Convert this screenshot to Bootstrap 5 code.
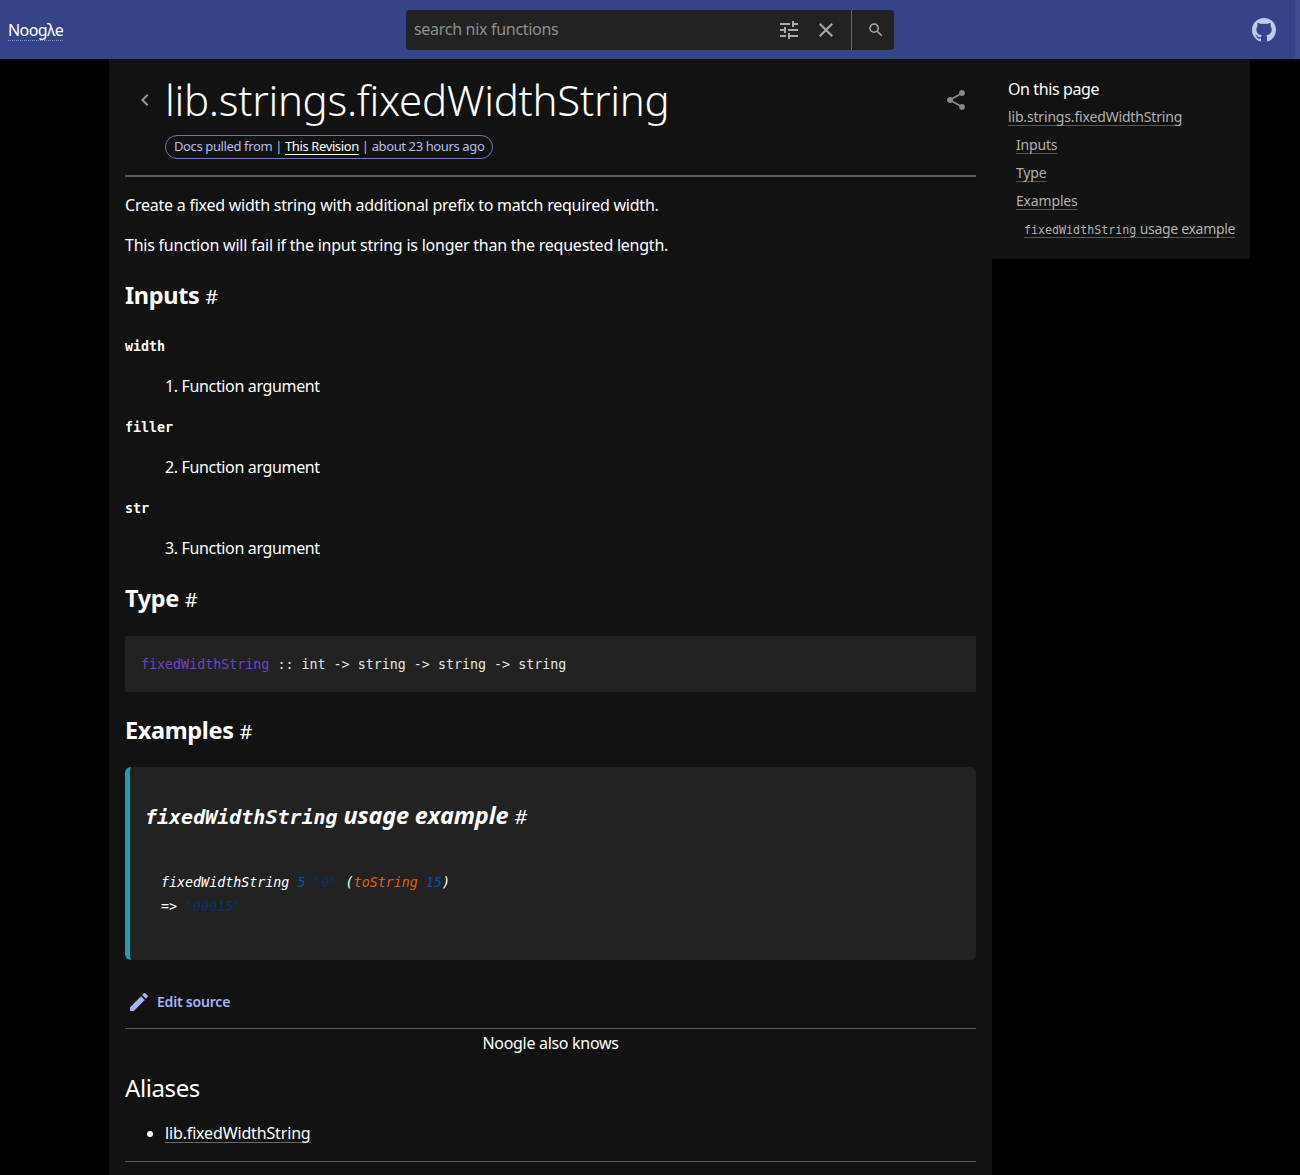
<!DOCTYPE html>
<html lang="en">
<head>
<meta charset="utf-8">
<title>lib.strings.fixedWidthString</title>
<link href="https://cdn.jsdelivr.net/npm/bootstrap@5.3.0/dist/css/bootstrap.min.css" rel="stylesheet">
<style>
html,body{height:1175px;overflow:hidden}
body{background:#000;color:#fff;font-family:"Noto Sans","Open Sans",sans-serif;font-size:16px;line-height:24px;letter-spacing:-.235px}
.mono{font-family:"DejaVu Sans Mono","Liberation Mono",monospace}
.topbar{height:59px;background:#354389;padding:0 8px}
.scrolltrack{width:5px;top:0;right:0;height:59px;background:rgba(255,255,255,.05)}
.brand{color:#fff;font-size:16px;letter-spacing:-.6px;text-decoration:underline dotted 1px;text-underline-offset:4px;text-decoration-color:#8a94c4}
.searchbox{width:488px;height:40px;background:#222;border-radius:4px;color:#8e8e8e}
.searchbox .ph{font-size:16px;line-height:38px;height:40px;padding-left:8px;letter-spacing:-.3px}
.searchsep{width:1px;height:40px;background:#666;margin-left:4px}
.icotune{margin-right:13px}
.icoclose{margin-right:9px}
.searchgo{width:42px;padding-left:6px}
.ghicon{margin-right:16px}
.shell{display:grid;grid-template-columns:883px 258px;margin-left:109px;align-items:start}
.mainpane{background:#121212;height:1116px;padding:0 16px}
.tocpane{background:#121212;height:200px;padding:18px 0 0 16px;font-size:14px;white-space:nowrap}
.tochead{font-size:16px;line-height:24px;height:28px;letter-spacing:-.4px}
.tocrow{height:28px;line-height:24px;color:#b0b0b0;letter-spacing:-.17px}
.tocrow a{color:#b0b0b0;text-decoration:underline 1px;text-decoration-color:#555;text-underline-offset:3px}
.tocrow.tl2{letter-spacing:-.3px}
.tocrow .mono{font-size:11.67px}
.tl1{padding-left:8px}.tl2{padding-left:16px}
.titlerow{height:118px;border-bottom:2px solid #5c5c5c}
.backicon{width:40px;padding-left:8px}
.topicon{margin-top:29px}
.shareicon{margin-right:8px}
.pagetitle{font-size:42px;line-height:50px;font-weight:300;margin:16px 0 0;letter-spacing:-.3px}
.pillbox{display:inline-block;height:24px;line-height:21px;border:1px solid #6a78c0;border-radius:12px;padding:0 8px;font-size:13px;color:#b4bcec;margin-top:10px;letter-spacing:-.38px;vertical-align:top}
.pillbox a{color:#fff;text-underline-offset:3px}
.para{margin:0;line-height:24px;height:40px}
.sect{font-size:23.5px;font-weight:700;line-height:32px;margin:0;letter-spacing:-.35px}
.hash{font-size:20px;font-weight:400;letter-spacing:0}
.argname{font-size:13.33px;font-weight:700;line-height:20px;height:21px}
.argdesc{padding-left:40px;height:60px;padding-top:16px;letter-spacing:-.35px}
.codebox{background:#222;height:56px;padding:17px 16px 15px;font-size:13.33px;line-height:24px;border-radius:2px;color:#e6e6e6}
.fnc{color:#6f42c1}
.notebox{background:#222;border-left:5px solid #17a2b8;border-radius:6px;height:193px;padding:32px 15px 0;font-style:italic}
.ntitle{font-size:23.5px;font-weight:700;line-height:32px;margin:0;letter-spacing:-.2px}
.ntitle .mono{font-size:20px}
.egcode{font-size:13.33px;line-height:24px;padding:38px 16px 0}
.nb{color:#0550ae}.ns{color:#0a3069}.no{color:#d9650f}
.editlink{color:#a5b4f5;font-size:14px;font-weight:600;text-decoration:none;letter-spacing:-.2px;height:24px;margin-top:30px}
.editicon{margin-left:2px;margin-right:6px}
.hrline{height:1px;background:#5c5c5c}
.knows{margin-top:2px;letter-spacing:-.3px}
.aliastitle{font-size:24px;line-height:32px;font-weight:400;margin:17px 0 0;letter-spacing:-.4px}
.aliaslist{margin:17px 0 0;padding-left:40px;letter-spacing:-.15px}
.aliaslist a{color:#fff;text-decoration:underline 1px;text-decoration-color:#667;text-underline-offset:3px}
.mono{letter-spacing:0}
</style>
</head>
<body>
<header class="topbar d-flex align-items-center justify-content-between position-relative">
  <a class="brand" href="#">Noogλe</a>
  <div class="searchbox d-flex align-items-center position-absolute top-50 start-50 translate-middle">
    <span class="ph flex-grow-1">search nix functions</span>
    <svg class="icotune" width="24" height="24" viewBox="0 0 24 24" fill="#aaa"><path d="M3 17v2h6v-2H3zM3 5v2h10V5H3zm10 16v-2h8v-2h-8v-2h-2v6h2zM7 9v2H3v2h4v2h2V9H7zm14 4v-2H11v2h10zm-6-4h2V7h4V5h-4V3h-2v6z"/></svg>
    <svg class="icoclose" width="24" height="24" viewBox="0 0 24 24" fill="#aaa"><path d="M19 6.41 17.59 5 12 10.59 6.41 5 5 6.41 10.59 12 5 17.59 6.41 19 12 13.41 17.59 19 19 17.59 13.41 12z"/></svg>
    <span class="searchsep"></span>
    <span class="searchgo d-flex justify-content-center"><svg width="18" height="18" viewBox="0 0 24 24" fill="#aaa"><path d="M15.5 14h-.79l-.28-.27A6.47 6.47 0 0 0 16 9.5 6.5 6.5 0 1 0 9.5 16c1.61 0 3.09-.59 4.23-1.57l.27.28v.79l5 4.99L20.49 19l-4.99-5zm-6 0C7.01 14 5 11.99 5 9.5S7.01 5 9.5 5 14 7.01 14 9.5 11.99 14 9.5 14z"/></svg></span>
  </div>
  <svg class="ghicon" width="24" height="24" viewBox="0 0 16 16" fill="#c3cae8"><path d="M8 0C3.58 0 0 3.58 0 8c0 3.54 2.29 6.53 5.47 7.59.4.07.55-.17.55-.38 0-.19-.01-.82-.01-1.49-2.01.37-2.53-.49-2.69-.94-.09-.23-.48-.94-.82-1.13-.28-.15-.68-.52-.01-.53.63-.01 1.08.58 1.23.82.72 1.21 1.87.87 2.33.66.07-.52.28-.87.51-1.07-1.78-.2-3.64-.89-3.64-3.95 0-.87.31-1.59.82-2.15-.08-.2-.36-1.02.08-2.12 0 0 .67-.21 2.2.82.64-.18 1.32-.27 2-.27s1.36.09 2 .27c1.53-1.04 2.2-.82 2.2-.82.44 1.1.16 1.92.08 2.12.51.56.82 1.27.82 2.15 0 3.07-1.87 3.75-3.65 3.95.29.25.54.73.54 1.48 0 1.07-.01 1.93-.01 2.2 0 .21.15.46.55.38A8.01 8.01 0 0 0 16 8c0-4.42-3.58-8-8-8z"/></svg>
  <span class="scrolltrack position-absolute"></span>
</header>
<div class="shell">
  <main class="mainpane">
    <div class="titlerow d-flex">
      <div class="backicon d-flex flex-shrink-0"><svg class="topicon" width="24" height="24" viewBox="0 0 24 24" fill="#999" aria-hidden="true"><path d="M15.41 7.41 14 6l-6 6 6 6 1.41-1.41L10.83 12z"/></svg></div>
      <div class="flex-grow-1">
        <h1 class="pagetitle">lib.strings.fixedWidthString</h1>
        <span class="pillbox">Docs pulled from | <a href="#">This Revision</a> | about 23 hours ago</span>
      </div>
      <svg class="topicon shareicon" width="24" height="24" viewBox="0 0 24 24" fill="#8a8a8a"><path d="M18 16.08c-.76 0-1.44.3-1.96.77L8.91 12.7c.05-.23.09-.46.09-.7s-.04-.47-.09-.7l7.05-4.11c.54.5 1.25.81 2.04.81 1.66 0 3-1.34 3-3s-1.34-3-3-3-3 1.34-3 3c0 .24.04.47.09.7L8.04 9.81C7.5 9.31 6.79 9 6 9c-1.66 0-3 1.34-3 3s1.34 3 3 3c.79 0 1.5-.31 2.04-.81l7.12 4.16c-.05.21-.08.43-.08.65 0 1.61 1.31 2.92 2.92 2.92s2.92-1.31 2.92-2.92-1.31-2.92-2.92-2.92z"/></svg>
    </div>
    <p class="para mt-3">Create a fixed width string with additional prefix to match required width.</p>
    <p class="para">This function will fail if the input string is longer than the requested length.</p>
    <h2 class="sect" style="margin-top:6px">Inputs <span class="hash">#</span></h2>
    <div class="argname mono mt-4">width</div>
    <div class="argdesc">1. Function argument</div>
    <div class="argname mono">filler</div>
    <div class="argdesc">2. Function argument</div>
    <div class="argname mono">str</div>
    <div class="argdesc">3. Function argument</div>
    <h2 class="sect" style="margin-top:2px">Type <span class="hash">#</span></h2>
    <div class="codebox mono" style="margin-top:20px"><span class="fnc">fixedWidthString</span> :: int -&gt; string -&gt; string -&gt; string</div>
    <h2 class="sect" style="margin-top:22px">Examples <span class="hash">#</span></h2>
    <div class="notebox" style="margin-top:19px">
      <h3 class="ntitle"><span class="mono">fixedWidthString</span> usage example <span class="hash">#</span></h3>
      <div class="egcode mono">fixedWidthString <span class="nb">5</span> <span class="ns">"0"</span> (<span class="no">toString</span> <span class="nb">15</span>)<br>=&gt; <span class="ns">"00015"</span></div>
    </div>
    <a class="editlink d-flex align-items-center" href="#"><svg class="editicon" width="24" height="24" viewBox="0 0 24 24" fill="#a5b4f5"><path d="M3 17.25V21h3.75L17.81 9.94l-3.75-3.75L3 17.25zM20.71 7.04a1 1 0 0 0 0-1.41l-2.34-2.34a1 1 0 0 0-1.41 0l-1.83 1.83 3.75 3.75 1.83-1.83z"/></svg>Edit source</a>
    <div class="hrline" style="margin-top:14px"></div>
    <div class="text-center knows">Noogle also knows</div>
    <h2 class="aliastitle">Aliases</h2>
    <ul class="aliaslist"><li><a href="#">lib.fixedWidthString</a></li></ul>
    <div class="hrline" style="margin-top:16px"></div>
  </main>
  <aside class="tocpane">
    <div class="tochead">On this page</div>
    <div class="tocrow"><a href="#">lib.strings.fixedWidthString</a></div>
    <div class="tocrow tl1"><a href="#">Inputs</a></div>
    <div class="tocrow tl1"><a href="#">Type</a></div>
    <div class="tocrow tl1"><a href="#">Examples</a></div>
    <div class="tocrow tl2"><a href="#"><span class="mono">fixedWidthString</span> usage example</a></div>
  </aside>
</div>
</body>
</html>
